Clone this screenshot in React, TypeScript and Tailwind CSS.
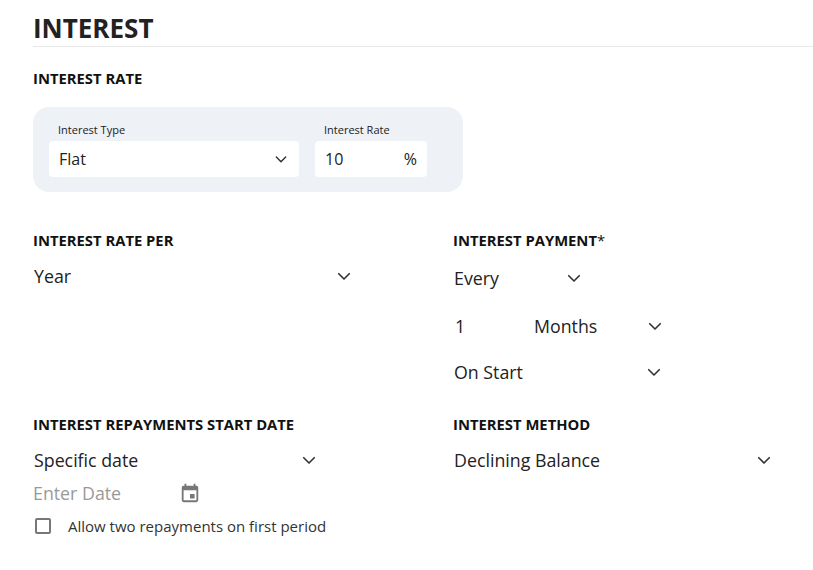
import React from "react";

const Chev = ({ s = 18 }: { s?: number }) => (
  <svg width={s} height={s} viewBox="0 0 24 24" fill="none" stroke="#333" strokeWidth="2.2" strokeLinecap="round" strokeLinejoin="round"><path d="M5 9l7 7 7-7" /></svg>
);

const Sel = ({ text, w, className = "" }: { text: string; w: number; className?: string }) => (
  <div className={`flex items-center justify-between text-[17.8px] text-[#222] h-[26px] ${className}`} style={{ width: w }}>
    <span>{text}</span>
    <Chev />
  </div>
);

const H = ({ children }: { children: React.ReactNode }) => (
  <div className="text-[14.8px] font-bold text-[#111] leading-[20px]">{children}</div>
);

export default function App() {
  return (
    <div className="w-[813px] h-[570px] bg-white pl-[33px] pt-[12px] text-[#222]" style={{ fontFamily: '"Open Sans", sans-serif' }}>
      <div className="text-[26px] font-bold leading-[32px] text-[#222]">INTEREST</div>
      <div className="h-px bg-[#e8e8e8] mt-[2px] w-[780px]" />
      <div className="mt-[21px]"><H>INTEREST RATE</H></div>
      <div className="mt-[19px] w-[430px] h-[85px] rounded-[16px] bg-[#eef1f6] flex gap-[16px] pl-[16px] pt-[16px]">
        <div>
          <div className="text-[11px] leading-[14px] pl-[9px] mb-[4px]">Interest Type</div>
          <div className="w-[250px] h-[36px] bg-white rounded-[4px] flex items-center justify-between px-[10px] text-[16px]">
            <span>Flat</span><Chev s={16} />
          </div>
        </div>
        <div>
          <div className="text-[11px] leading-[14px] pl-[9px] mb-[4px]">Interest Rate</div>
          <div className="w-[112px] h-[36px] bg-white rounded-[4px] flex items-center justify-between px-[10px] text-[16px]">
            <span>10</span><span>%</span>
          </div>
        </div>
      </div>
      <div className="flex mt-[38px]">
        <div className="w-[420px]">
          <H>INTEREST RATE PER</H>
          <Sel text="Year" w={320} className="mt-[13px] pl-[1px]" />
        </div>
        <div>
          <H>INTEREST PAYMENT<span className="font-normal">*</span></H>
          <Sel text="Every" w={130} className="mt-[15px] pl-[1px]" />
          <div className="flex mt-[22px] pl-[2px]">
            <span className="w-[79px] text-[17.8px] h-[26px]">1</span>
            <Sel text="Months" w={130} />
          </div>
          <Sel text="On Start" w={210} className="mt-[20px] pl-[1px]" />
        </div>
      </div>
      <div className="flex mt-[29px]">
        <div className="w-[420px]">
          <H>INTEREST REPAYMENTS START DATE</H>
          <Sel text="Specific date" w={285} className="mt-[13px] pl-[1px]" />
          <div className="flex items-center mt-[7px] h-[26px]">
            <span className="w-[146px] text-[17.8px] text-[#999]">Enter Date</span>
            <svg width="22" height="22" viewBox="0 0 24 24" fill="#777"><path d="M19 4h-1V2h-2v2H8V2H6v2H5a2 2 0 00-2 2v14a2 2 0 002 2h14a2 2 0 002-2V6a2 2 0 00-2-2zm0 16H5V9h14v11zm-7-7h5v5h-5z" /></svg>
          </div>
          <div className="flex items-center mt-[9px] pl-[2px]">
            <span className="w-[16px] h-[16px] border-2 border-[#777] rounded-[2px]" />
            <span className="ml-[17px] text-[15px] text-[#333]">Allow two repayments on first period</span>
          </div>
        </div>
        <div>
          <H>INTEREST METHOD</H>
          <Sel text="Declining Balance" w={320} className="mt-[13px] pl-[1px]" />
        </div>
      </div>
    </div>
  );
}
